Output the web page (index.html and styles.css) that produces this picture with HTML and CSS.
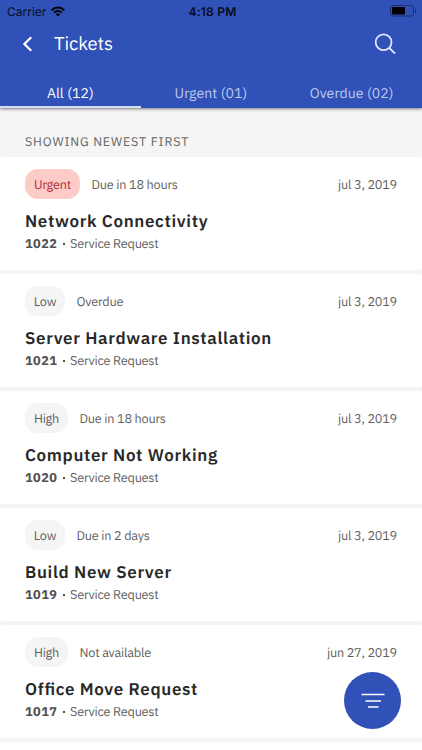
FILE: index.html
```html
<!DOCTYPE html>
<html lang="en">
<head>
    <meta charset="UTF-8">
    <meta name="viewport" content="width=device-width, initial-scale=1.0">
    <title>Tickets</title>
    <link rel="stylesheet" href="styles.css">
</head>
<body>
    <header class="header">
        <div class="status-bar">
            <div class="carrier">
                <span>Carrier</span>
                <svg width="14" height="11" viewBox="0 0 14 11">
                    <path d="M0 3.4a10 10 0 0 1 14 0L12.6 4.9a8 8 0 0 0-11.2 0z"/>
                    <path d="M2.4 5.9a6.6 6.6 0 0 1 9.2 0L10.2 7.3a4.6 4.6 0 0 0-6.4 0z"/>
                    <path d="M4.8 8.3a3.2 3.2 0 0 1 4.4 0L7 10.6z"/>
                </svg>
            </div>
            <div class="time">4:18 PM</div>
            <svg class="battery" width="27" height="12" viewBox="0 0 27 12">
                <rect class="battery-frame" x="0.5" y="0.5" width="23" height="10.5" rx="2.6"/>
                <rect x="2" y="2" width="13" height="7.5" rx="1"/>
                <path class="battery-tip" d="M25 4v4q1.4-.6 1.4-2T25 4z"/>
            </svg>
        </div>
        <div class="nav">
            <svg class="back" width="12" height="16" viewBox="0 0 12 16">
                <path d="M10.2 1.3L3.4 8l6.8 6.7"/>
            </svg>
            <h1 class="nav-title">Tickets</h1>
            <svg class="search" width="22" height="22" viewBox="0 0 22 22">
                <circle cx="9.6" cy="9.2" r="7.9"/>
                <path d="M15.2 14.8L21 20.5"/>
            </svg>
        </div>
        <nav class="tabs">
            <a class="tab active">All (12)</a>
            <a class="tab">Urgent (01)</a>
            <a class="tab">Overdue (02)</a>
        </nav>
    </header>

    <div class="list-header">SHOWING NEWEST FIRST</div>

    <main class="tickets">
        <article class="ticket">
            <div class="ticket-top">
                <span class="badge urgent">Urgent</span>
                <span class="due">Due in 18 hours</span>
                <span class="date">jul 3, 2019</span>
            </div>
            <h2 class="ticket-title">Network Connectivity</h2>
            <p class="ticket-info"><b>1022</b><i class="dot"></i><span>Service Request</span></p>
        </article>
        <article class="ticket">
            <div class="ticket-top">
                <span class="badge">Low</span>
                <span class="due">Overdue</span>
                <span class="date">jul 3, 2019</span>
            </div>
            <h2 class="ticket-title">Server Hardware Installation</h2>
            <p class="ticket-info"><b>1021</b><i class="dot"></i><span>Service Request</span></p>
        </article>
        <article class="ticket">
            <div class="ticket-top">
                <span class="badge high">High</span>
                <span class="due">Due in 18 hours</span>
                <span class="date">jul 3, 2019</span>
            </div>
            <h2 class="ticket-title">Computer Not Working</h2>
            <p class="ticket-info"><b>1020</b><i class="dot"></i><span>Service Request</span></p>
        </article>
        <article class="ticket">
            <div class="ticket-top">
                <span class="badge">Low</span>
                <span class="due">Due in 2 days</span>
                <span class="date">jul 3, 2019</span>
            </div>
            <h2 class="ticket-title">Build New Server</h2>
            <p class="ticket-info"><b>1019</b><i class="dot"></i><span>Service Request</span></p>
        </article>
        <article class="ticket">
            <div class="ticket-top">
                <span class="badge high">High</span>
                <span class="due">Not available</span>
                <span class="date">jun 27, 2019</span>
            </div>
            <h2 class="ticket-title">Office Move Request</h2>
            <p class="ticket-info"><b>1017</b><i class="dot"></i><span>Service Request</span></p>
        </article>
        <div class="ticket-next"></div>
    </main>

    <button class="filter-button" aria-label="Filter">
        <svg width="24" height="16" viewBox="0 0 24 16">
            <path d="M.5 1.5h23M4.5 8h15.5M7 14h10.5"/>
        </svg>
    </button>
</body>
</html>
```
FILE: styles.css
```css
* {
    box-sizing: border-box;
}
body {
    display: flex;
    flex-direction: column;
    margin: 0;
    height: 100vh;
    overflow: hidden;
    background-color: #f5f5f5;
    font-family: "IBM Plex Sans", Roboto, sans-serif;
    text-rendering: geometricPrecision;
    color: #5f5f5f;
}
.header {
    position: relative;
    height: 108px;
    background-color: #3051b7;
    box-shadow: 0 1px 3px rgba(0, 0, 0, 0.5);
}
.status-bar {
    display: grid;
    grid-template-columns: 1fr auto 1fr;
    align-items: center;
    height: 22px;
    padding: 0 5px 0 7px;
    font-family: Inter, sans-serif;
    font-size: 12px;
    color: #080d20;
}
.carrier {
    display: flex;
    align-items: center;
    gap: 5px;
}
.time {
    padding-left: 1px;
    font-weight: 600;
    letter-spacing: 0.2px;
}
.battery {
    justify-self: end;
}
.battery-frame {
    fill: none;
    stroke: #1c2d6c;
}
.battery-tip {
    fill: #1c2d6c;
}
.nav {
    display: flex;
    align-items: center;
    height: 44px;
    padding: 0 26px 0 21px;
}
.back {
    fill: none;
    stroke: #fff;
    stroke-width: 2.2;
}
.nav-title {
    flex: 1;
    margin: -1px 0 0 21px;
    font-size: 18.5px;
    font-weight: 400;
    letter-spacing: -0.1px;
    color: #fff;
}
.search {
    fill: none;
    stroke: #e0e8ff;
    stroke-width: 1.8;
}
.tabs {
    display: grid;
    grid-template-columns: repeat(3, 1fr);
    height: 42px;
}
.tab {
    padding-top: 17px;
    text-align: center;
    font-size: 14px;
    line-height: 20px;
    letter-spacing: 0.1px;
    color: #bdcaf0;
}
.tab.active {
    color: #fff;
    border-bottom: 2px solid #d5dcf2;
}
.list-header {
    height: 49px;
    padding: 24px 25px 0;
    font-size: 12.5px;
    line-height: 20px;
    letter-spacing: 0.83px;
    color: #666;
}
.tickets {
    display: flex;
    flex: 1;
    flex-direction: column;
    gap: 4px;
}
.ticket {
    height: 113px;
    flex-shrink: 0;
    padding: 12px 25px 0;
    background-color: #fff;
    border-radius: 2px;
}
.ticket-next {
    flex: 1;
    background-color: #fff;
}
.ticket-top {
    display: flex;
    height: 30px;
    font-size: 12.7px;
    line-height: 32px;
    letter-spacing: -0.22px;
}
.badge {
    width: 40px;
    height: 30px;
    border-radius: 13px;
    background-color: #f5f5f5;
    text-align: center;
}
.badge.high {
    width: 43px;
}
.badge.urgent {
    width: 55px;
    background-color: #fdcbc8;
    color: #b32e32;
}
.due {
    margin-left: 11.5px;
}
.date {
    margin-left: auto;
}
.ticket-title {
    margin: 11px 0 0;
    font-size: 17px;
    font-weight: 600;
    font-feature-settings: "liga" 1;
    line-height: 23px;
    letter-spacing: 0.65px;
    color: #282828;
}
.ticket-info {
    display: flex;
    align-items: center;
    margin: 1px 0 0;
    font-size: 12.7px;
    line-height: 20px;
    letter-spacing: -0.22px;
}
.ticket-info b {
    width: 33px;
    letter-spacing: 0.5px;
    color: #505050;
}
.dot {
    width: 2px;
    height: 2px;
    margin: 0 5px;
    background-color: #505050;
}
.filter-button {
    position: fixed;
    left: 344px;
    top: 672px;
    display: flex;
    align-items: center;
    justify-content: center;
    width: 57px;
    height: 57px;
    padding: 0;
    border: none;
    border-radius: 50%;
    background-color: #3051b7;
    cursor: pointer;
}
.filter-button svg {
    fill: none;
    stroke: #fff;
    stroke-width: 1.6;
}
```
